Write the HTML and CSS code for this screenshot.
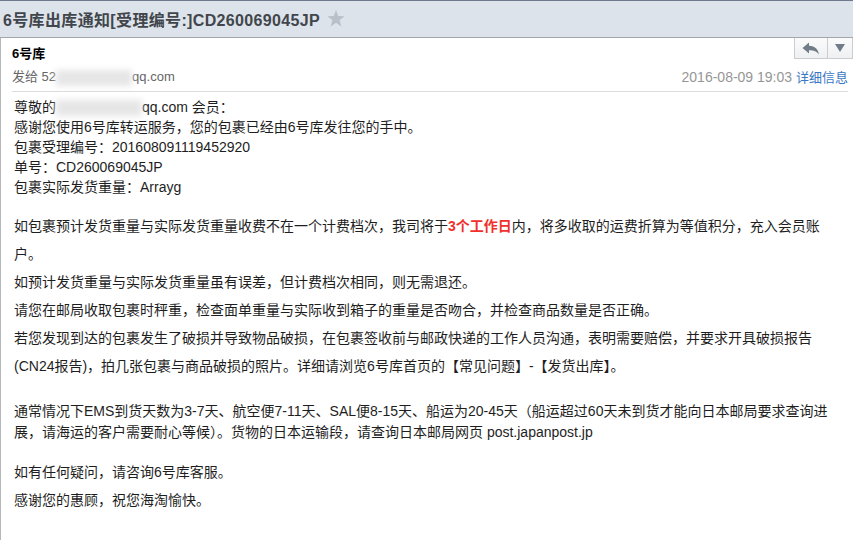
FILE: index.html
```html
<!DOCTYPE html>
<html lang="zh-CN">
  <head>
    <meta charset="UTF-8" />
    <meta name="viewport" content="width=device-width, initial-scale=1.0" />
    <title>6号库出库通知</title>
    <link rel="stylesheet" href="styles.css">
  </head>
  <body>
    <div class="subject">
      <h1 class="subject-title">6号库出库通知[受理编号:]CD260069045JP</h1>
      <svg class="star" width="18" height="17" viewBox="0 0 18 17">
        <polygon points="9,0 11.2,6 17.6,6.2 12.6,10.1 14.3,16.4 9,12.7 3.7,16.4 5.4,10.1 0.4,6.2 6.8,6" fill="#b9c0c9" />
      </svg>
    </div>

    <div class="panel">
      <div class="head">
        <div class="head-top">
          <div class="sender">6号库</div>
          <div class="actions">
            <button class="act act-reply" title="回复">
              <svg width="18" height="13" viewBox="0 0 18 13">
                <path d="M7 0.5 L0.5 6 L7 11.5 V8.3 C11.5 8.1 14.6 9.3 17 12.5 C16.2 7.4 13 4.2 7 3.8 Z" fill="#717c88" />
              </svg>
            </button>
            <button class="act act-more" title="更多">
              <svg width="10" height="8" viewBox="0 0 10 8">
                <polygon points="0,0 10,0 5,8" fill="#717c88" />
              </svg>
            </button>
          </div>
        </div>
        <div class="meta">
          <span class="to">发给 52<span class="blur blur-to"></span>qq.com</span>
          <span class="time">2016-08-09 19:03 <a class="detail" href="#">详细信息</a></span>
        </div>
      </div>

      <div class="content">
        <div class="block block-info">
          尊敬的<span class="blur blur-name"></span>qq.com 会员：<br />
          感谢您使用6号库转运服务，您的包裹已经由6号库发往您的手中。<br />
          包裹受理编号：201608091119452920<br />
          单号：CD260069045JP<br />
          包裹实际发货重量：Arrayg
        </div>

        <div class="block block-notes">
          <p>如包裹预计发货重量与实际发货重量收费不在一个计费档次，我司将于<strong class="hl">3个工作日</strong>内，将多收取的运费折算为等值积分，充入会员账户。</p>
          <p>如预计发货重量与实际发货重量虽有误差，但计费档次相同，则无需退还。</p>
          <p>请您在邮局收取包裹时秤重，检查面单重量与实际收到箱子的重量是否吻合，并检查商品数量是否正确。</p>
          <p>若您发现到达的包裹发生了破损并导致物品破损，在包裹签收前与邮政快递的工作人员沟通，表明需要赔偿，并要求开具破损报告(CN24报告)，拍几张包裹与商品破损的照片。详细请浏览6号库首页的【常见问题】-【发货出库】。</p>
        </div>

        <div class="block block-transit">
          通常情况下EMS到货天数为3-7天、航空便7-11天、SAL便8-15天、船运为20-45天（船运超过60天未到货才能向日本邮局要求查询进展，请海运的客户需要耐心等候）。货物的日本运输段，请查询日本邮局网页 post.japanpost.jp
        </div>

        <div class="block block-end">
          <p>如有任何疑问，请咨询6号库客服。</p>
          <p>感谢您的惠顾，祝您海淘愉快。</p>
        </div>
      </div>
    </div>
  </body>
</html>
```

FILE: styles.css
```css
body {
  margin: 0;
  padding: 0;
  font-family: "Liberation Sans", "Noto Sans CJK SC", sans-serif;
  background-color: #fff;
  color: #222;
}

.subject {
  display: flex;
  align-items: center;
  height: 36px;
  padding-left: 3px;
  background-color: #dde3ea;
  border-top: 1px solid #6c7a8c;
  border-bottom: 1px solid #a3a7ac;
}
.subject-title {
  margin: 0;
  font-size: 16px;
  font-weight: bold;
  color: #41464c;
  letter-spacing: 0.35px;
}
.star {
  margin-left: 7px;
  margin-top: -1px;
}

.panel {
  border-left: 1px solid #b4b8bd;
  min-height: 502px;
}

.head {
  padding: 0 5px 0 11px;
}
.head-top {
  display: flex;
  justify-content: space-between;
  align-items: flex-start;
  height: 30px;
}
.sender {
  padding-top: 7px;
  font-size: 13px;
  line-height: 18px;
  font-weight: bold;
  color: #000;
}
.actions {
  display: flex;
  margin-right: -5px;
  border: 1px solid #c9cdd2;
  border-top: none;
  background: linear-gradient(#fbfbfc, #eef0f2);
}
.act {
  display: flex;
  align-items: center;
  justify-content: center;
  height: 20px;
  padding: 0;
  border: none;
  background: none;
  cursor: pointer;
}
.act-reply {
  width: 33px;
  border-right: 1px solid #c9cdd2;
}
.act-more {
  width: 24px;
}

.meta {
  display: flex;
  justify-content: space-between;
  align-items: center;
  height: 20px;
  margin-top: -1px;
  padding-bottom: 4px;
  border-bottom: 1px solid #dcdcdc;
  font-size: 13px;
  line-height: 20px;
}
.to {
  color: #666;
}
.time {
  font-size: 14px;
  color: #969696;
}
.detail {
  font-size: 13px;
  color: #3b78c4;
  text-decoration: none;
}

.blur {
  display: inline-block;
  vertical-align: middle;
  height: 16px;
  background-color: #e6e6e6;
  filter: blur(3px);
}
.blur-to {
  width: 76px;
}
.blur-name {
  width: 86px;
}

.content {
  padding: 5px 14px 20px 13px;
  font-size: 14px;
  color: #1e1e1e;
}
.block p {
  margin: 0;
}
.block-info {
  line-height: 20px;
}
.block-notes {
  margin-top: 15px;
  line-height: 28px;
}
.block-transit {
  margin-top: 21px;
  line-height: 21px;
}
.block-end {
  margin-top: 15px;
  line-height: 28px;
}
.hl {
  color: #f0302c;
}
```
